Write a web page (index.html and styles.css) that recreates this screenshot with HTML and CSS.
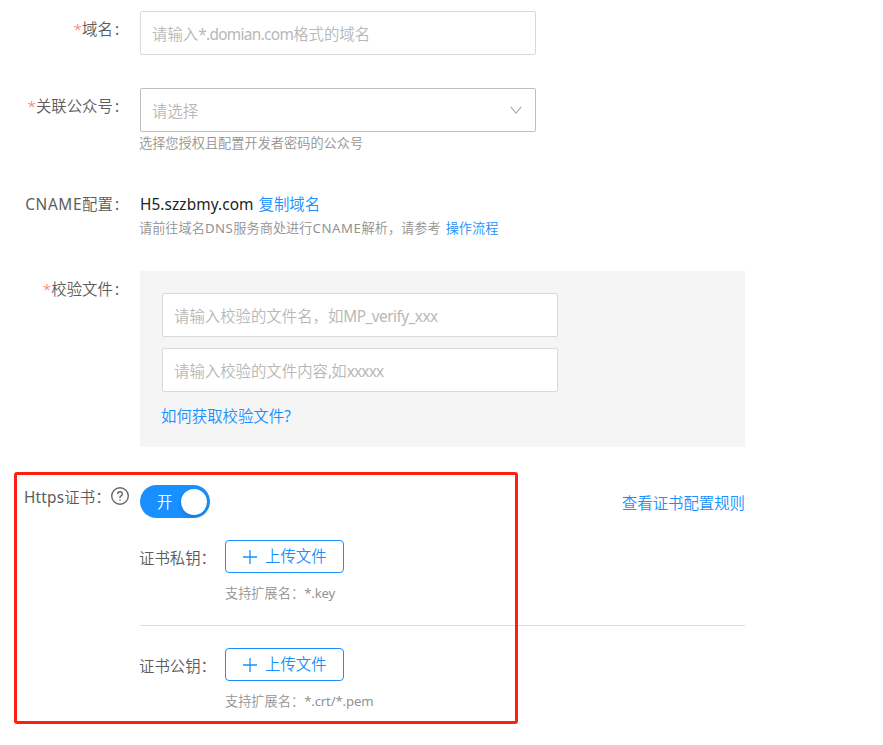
FILE: index.html
```html
<!DOCTYPE html>
<html lang="zh-CN">
<head>
<meta charset="utf-8">
<title>域名配置</title>
<link rel="stylesheet" href="styles.css">
</head>
<body>
<form class="form">
  <div class="row row-domain">
    <div class="label"><span class="star">*</span>域名<span class="colon">:</span></div>
    <div class="field"><div class="input"><span>请输入<span class="lt-domain">*.domian.com</span>格式的域名</span></div></div>
  </div>
  <div class="row row-account">
    <div class="label"><span class="star">*</span>关联公众号<span class="colon">:</span></div>
    <div class="field">
      <div class="input select"><span>请选择</span>
        <svg class="chevron" viewBox="0 0 12 8"><path d="M.8 .8 6 7.2 11.2 .8"/></svg>
      </div>
      <div class="help">选择您授权且配置开发者密码的公众号</div>
    </div>
  </div>
  <div class="row row-cname">
    <div class="label"><span class="lt-cname">CNAME</span>配置<span class="colon">:</span></div>
    <div class="field">
      <div class="value"><span class="lt-host">H5.szzbmy.com</span><a>复制域名</a></div>
      <div class="help help-cname">请前往域名<span class="lt-dns">DNS</span>服务商处进行<span class="lt-cname2">CNAME</span>解析，请参考<a>操作流程</a></div>
    </div>
  </div>
  <div class="row row-verify">
    <div class="label"><span class="star">*</span>校验文件<span class="colon">:</span></div>
    <div class="field panel">
      <div class="input"><span>请输入校验的文件名，如<span class="lt-mp">MP_verify_xxx</span></span></div>
      <div class="input"><span>请输入校验的文件内容<span class="lt-x">,</span>如<span class="lt-x">xxxxx</span></span></div>
      <a>如何获取校验文件<span class="lt-q">?</span></a>
    </div>
  </div>
  <div class="row row-https">
    <div class="label label-https"><span class="lt-https">Https</span>证书：<svg class="question" viewBox="0 0 18 18"><circle cx="9" cy="9" r="8.3"/><path d="M6.7 7.1C6.7 5.6 7.6 4.8 9 4.8s2.3.9 2.3 2.1c0 1.1-.7 1.6-1.3 2-.7.4-1 .8-1 1.5v.5"/><path class="dot" d="M9 12.2v1.3"/></svg></div>
    <div class="field">
      <div class="switch-line">
        <div class="switch"><span>开</span><i class="knob"></i></div>
        <a>查看证书配置规则</a>
      </div>
      <div class="cert cert-private">
        <div class="cert-label">证书私钥：</div>
        <div>
          <div class="upload"><svg class="plus" viewBox="0 0 14 14"><path d="M7 0v14M0 7h14"/></svg>上传文件</div>
          <div class="help help-cert">支持扩展名：<span class="lt-key">*.key</span></div>
        </div>
      </div>
      <div class="cert">
        <div class="cert-label">证书公钥：</div>
        <div>
          <div class="upload"><svg class="plus" viewBox="0 0 14 14"><path d="M7 0v14M0 7h14"/></svg>上传文件</div>
          <div class="help help-cert">支持扩展名：<span class="lt-crt">*.crt/*.pem</span></div>
        </div>
      </div>
    </div>
  </div>
</form>
<div class="highlight"></div>
</body>
</html>
```
FILE: styles.css
```css
* { box-sizing: border-box; }
body {
  margin: 0;
  height: 745px;
  position: relative;
  overflow: hidden;
  background: #fff;
  color: #5c5c5c;
  font: 350 15.4px/22px "Noto Sans", "Noto Sans CJK SC", sans-serif;
  white-space: nowrap;
}
a { color: #1890ff; }
svg { fill: none; flex: none; }
[class^="lt-"] { font-weight: 400; }
.form { width: 745px; padding-top: 11px; }
.row { display: grid; grid-template-columns: 140px 605px; align-items: start; }
.row-domain { height: 77px; }
.row-account { height: 106px; }
.row-cname { height: 77px; }
.row-verify { height: 214px; }
.label { text-align: right; padding: 8px 21px 0 0; }
.star { color: #ff6b5e; }
.colon { margin-left: 2px; font-weight: 400; }
.lt-domain { letter-spacing: -.68px; }
.lt-cname { letter-spacing: .6px; }
.lt-host { letter-spacing: .08px; }
.lt-dns { letter-spacing: .5px; }
.lt-cname2 { letter-spacing: .6px; }
.lt-mp { letter-spacing: -.54px; }
.lt-x { letter-spacing: -.8px; }
.lt-https { letter-spacing: .2px; }
.lt-key, .lt-crt { letter-spacing: -.15px; }
.input {
  width: 396px;
  height: 44px;
  flex: none;
  display: flex;
  align-items: center;
  justify-content: space-between;
  padding: 4px 13px 0 11px;
  border: 1px solid #d9d9d9;
  border-radius: 2px;
  background: #fff;
  color: #b8b8b8;
}
.select { border-color: #bfbfbf; }
.chevron { width: 12px; height: 8px; stroke: #aaa; stroke-width: 1.1; margin-top: -4px; }
.help { font-size: 13.2px; line-height: 22px; color: #929292; margin-left: -1px; }
.row-cname .label { padding-top: 0; }
.value { color: #222; display: flex; gap: 5px; }
.help-cname { padding-top: 1px; }
.help-cname a { margin-left: 5px; }
.panel {
  height: 176px;
  padding: 22px;
  display: flex;
  flex-direction: column;
  align-items: flex-start;
  gap: 11px;
  background: #f5f5f5;
}
.panel a { margin: 3px 0 0 -1px; }
.row-https .label {
  display: flex;
  align-items: center;
  padding: 2px 0 0 24px;
}
.question { width: 18px; height: 18px; stroke: #666; stroke-width: 1.4; margin-top: -4px; }
.switch-line { display: flex; justify-content: space-between; align-items: center; height: 33px; }
.switch-line a { padding-top: 4px; }
.switch {
  width: 70px;
  height: 33px;
  border-radius: 17px;
  background: #1890ff;
  color: #fff;
  display: flex;
  align-items: center;
  justify-content: space-between;
  padding: 0 3px 0 17px;
}
.switch span { padding-top: 2px; }
.knob { width: 26px; height: 26px; border-radius: 50%; background: #fff; box-shadow: 0 2px 4px rgba(0, 35, 11, .2); }
.cert { display: grid; grid-template-columns: 85px 1fr; padding-top: 22px; }
.cert-private { height: 108px; border-bottom: 1px solid #ddd; }
.cert-label { padding-top: 8px; margin-left: -1px; }
.upload {
  width: 119px;
  height: 33px;
  border: 1px solid #1890ff;
  border-radius: 4px;
  color: #1890ff;
  display: flex;
  align-items: center;
  gap: 8px;
  padding-left: 17px;
}
.plus { width: 14px; height: 14px; stroke: #1890ff; stroke-width: 1.3; }
.help-cert { padding-top: 9px; margin-left: 0; }
.highlight {
  position: absolute;
  left: 14px;
  top: 472px;
  width: 504px;
  height: 252px;
  border: 3px solid #ff1f12;
  border-radius: 3px;
}
```
